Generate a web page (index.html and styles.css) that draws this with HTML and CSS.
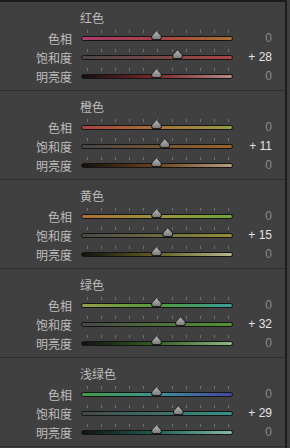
FILE: index.html
```html
<!DOCTYPE html>
<html lang="zh">
<head>
  <meta charset="UTF-8" />
  <title>HSL</title>
  <link rel="stylesheet" href="styles.css">
</head>
<body>
  <div class="panel">
    <div class="group">
      <div class="title">红色</div>
      <div class="label">色相</div>
      <div class="slider red-h"><span class="thumb" style="left: 50%"></span></div>
      <div class="value">0</div>
      <div class="label">饱和度</div>
      <div class="slider red-s"><span class="thumb" style="left: 64%"></span></div>
      <div class="value on">+ 28</div>
      <div class="label">明亮度</div>
      <div class="slider red-l"><span class="thumb" style="left: 50%"></span></div>
      <div class="value">0</div>
    </div>

    <div class="group">
      <div class="title">橙色</div>
      <div class="label">色相</div>
      <div class="slider orange-h"><span class="thumb" style="left: 50%"></span></div>
      <div class="value">0</div>
      <div class="label">饱和度</div>
      <div class="slider orange-s"><span class="thumb" style="left: 55.5%"></span></div>
      <div class="value on">+ 11</div>
      <div class="label">明亮度</div>
      <div class="slider orange-l"><span class="thumb" style="left: 50%"></span></div>
      <div class="value">0</div>
    </div>

    <div class="group">
      <div class="title">黄色</div>
      <div class="label">色相</div>
      <div class="slider yellow-h"><span class="thumb" style="left: 50%"></span></div>
      <div class="value">0</div>
      <div class="label">饱和度</div>
      <div class="slider yellow-s"><span class="thumb" style="left: 57.5%"></span></div>
      <div class="value on">+ 15</div>
      <div class="label">明亮度</div>
      <div class="slider yellow-l"><span class="thumb" style="left: 50%"></span></div>
      <div class="value">0</div>
    </div>

    <div class="group">
      <div class="title">绿色</div>
      <div class="label">色相</div>
      <div class="slider green-h"><span class="thumb" style="left: 50%"></span></div>
      <div class="value">0</div>
      <div class="label">饱和度</div>
      <div class="slider green-s"><span class="thumb" style="left: 66%"></span></div>
      <div class="value on">+ 32</div>
      <div class="label">明亮度</div>
      <div class="slider green-l"><span class="thumb" style="left: 50%"></span></div>
      <div class="value">0</div>
    </div>

    <div class="group">
      <div class="title">浅绿色</div>
      <div class="label">色相</div>
      <div class="slider aqua-h"><span class="thumb" style="left: 50%"></span></div>
      <div class="value">0</div>
      <div class="label">饱和度</div>
      <div class="slider aqua-s"><span class="thumb" style="left: 64.5%"></span></div>
      <div class="value on">+ 29</div>
      <div class="label">明亮度</div>
      <div class="slider aqua-l"><span class="thumb" style="left: 50%"></span></div>
      <div class="value">0</div>
    </div>
  </div>
</body>
</html>
```

FILE: styles.css
```css
body {
  margin: 0;
  background: #404040;
  font-family: 'Noto Sans CJK SC', sans-serif;
  font-size: 12px;
}
.panel {
  width: 285px;
  border-top: 2px solid #1c1c1c;
  border-right: 2px solid #1c1c1c;
  background: #404040;
  height: 446px;
  overflow: hidden;
}
.group {
  display: grid;
  grid-template-columns: 72px 9px 152px 39px;
  grid-template-rows: 18px repeat(3, 19px);
  padding: 9px 0 4px;
  border-bottom: 1px solid #2c2c2c;
}
.title {
  grid-column: 1 / -1;
  padding-left: 80px;
  line-height: 14px;
  color: #bcbcbc;
}
.label {
  grid-column: 1;
  text-align: right;
  color: #bdbdbd;
  line-height: 19px;
}
.slider {
  grid-column: 3;
  position: relative;
  height: 5px;
  align-self: center;
  box-sizing: border-box;
  border: 1px solid #151515;
  border-radius: 3px;
}
.slider::before {
  content: '';
  position: absolute;
  left: 5px;
  top: -7px;
  width: 142px;
  height: 3px;
  background: repeating-linear-gradient(to right, #6e6e6e 0 1px, transparent 1px 14.1px);
}
.thumb {
  position: absolute;
  top: -7px;
  width: 11px;
  height: 10px;
  margin-left: -6px;
  background: #1e1e1e;
  clip-path: polygon(50% 0, 64% 22%, 94% 55%, 100% 80%, 88% 100%, 12% 100%, 0 80%, 6% 55%, 36% 22%);
}
.thumb::before {
  content: '';
  position: absolute;
  left: 1px;
  top: 1px;
  right: 1px;
  bottom: 1px;
  background: linear-gradient(#bcbcbc, #7c7c7c);
  clip-path: polygon(50% 0, 64% 22%, 94% 55%, 100% 80%, 88% 100%, 12% 100%, 0 80%, 6% 55%, 36% 22%);
}
.value {
  grid-column: 4;
  text-align: right;
  font-family: 'Liberation Sans', sans-serif;
  color: #8a8a8a;
  line-height: 19px;
}
.value.on {
  color: #e4e4e4;
}

.red-h { background: linear-gradient(to right, #a83c6e, #a84242 50%, #a87036); }
.red-s { background: linear-gradient(to right, #4a4848, #a84444); }
.red-l { background: linear-gradient(to right, #121010, #80282a 50%, #b88a8a); }
.orange-h { background: linear-gradient(to right, #a84242, #a87036 50%, #969c44); }
.orange-s { background: linear-gradient(to right, #484746, #9c6228); }
.orange-l { background: linear-gradient(to right, #121010, #6e441c 50%, #b89e82); }
.yellow-h { background: linear-gradient(to right, #a87036, #9c943c 50%, #70a43c); }
.yellow-s { background: linear-gradient(to right, #484846, #948e3c); }
.yellow-l { background: linear-gradient(to right, #121210, #646022 50%, #b8b48e); }
.green-h { background: linear-gradient(to right, #969c44, #529c3c 50%, #3c9c96); }
.green-s { background: linear-gradient(to right, #464846, #529434); }
.green-l { background: linear-gradient(to right, #101210, #346022 50%, #8eb886); }
.aqua-h { background: linear-gradient(to right, #449c44, #3c9494 50%, #4444a4); }
.aqua-s { background: linear-gradient(to right, #464848, #349486); }
.aqua-l { background: linear-gradient(to right, #101212, #226056 50%, #86b8aa); }
```
